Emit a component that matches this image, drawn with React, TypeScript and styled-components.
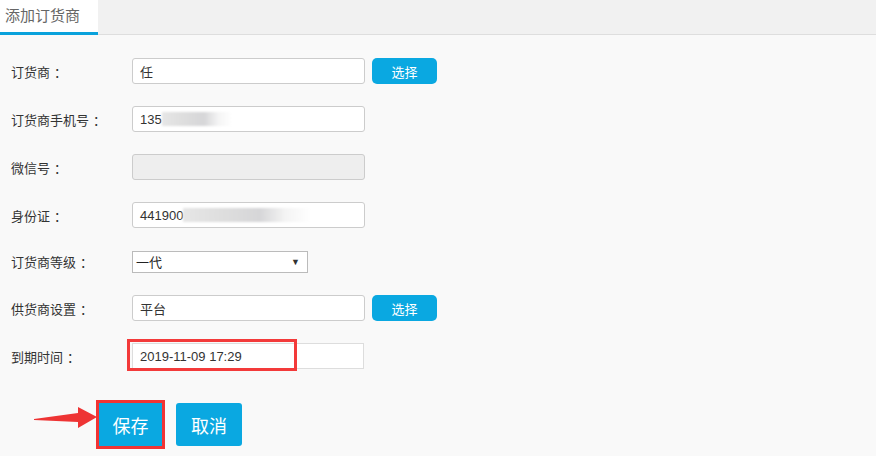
import styled, { createGlobalStyle } from 'styled-components'

const GlobalStyle = createGlobalStyle`
  html, body {
    margin: 0;
    padding: 0;
    background: #f9f9f9;
    font-family: "Liberation Sans", "Noto Sans CJK SC", sans-serif;
  }
`

const Page = styled.div`
  width: 876px;
  height: 456px;
  background: #f9f9f9;
  overflow: hidden;
  position: relative;
`

const TabBar = styled.div`
  height: 34px;
  background: #f1f1f1;
  border-bottom: 1px solid #dedede;
  display: flex;
`

const Tab = styled.div`
  width: 98px;
  background: #fff;
  border-bottom: 3px solid #0aa2dc;
  margin-bottom: -1px;
  padding-left: 5px;
  box-sizing: border-box;
  height: 35px;
  line-height: 31px;
  font-size: 15px;
  color: #666;
`

const Form = styled.div`
  padding: 23px 0 0 11px;
  display: flex;
  flex-direction: column;
  gap: 22px;
`

const Row = styled.div<{ $h?: number }>`
  display: flex;
  align-items: center;
  height: ${(p) => p.$h ?? 26}px;
`

const Label = styled.label`
  width: 121px;
  font-size: 13px;
  color: #333;
  flex-shrink: 0;
`

const Colon = styled.span`
  margin-left: 4px;
`

const Field = styled.div<{ $disabled?: boolean; $width?: number }>`
  width: ${(p) => p.$width ?? 233}px;
  height: 26px;
  box-sizing: border-box;
  border: 1px solid #cccccc;
  border-radius: 3px;
  background: ${(p) => (p.$disabled ? '#eeeeee' : '#fff')};
  padding-left: 7px;
  display: flex;
  align-items: center;
  font-size: 13px;
  color: #333;
  position: relative;
`

const Mask = styled.span<{ $w: number }>`
  display: inline-block;
  width: ${(p) => p.$w}px;
  height: 14px;
  background: linear-gradient(
    90deg,
    #e6e6e6 0%,
    #dedede 30%,
    #d6d6d8 60%,
    #f4f4f4 80%,
    #ffffff 100%
  );
  filter: blur(1px);
`

const Select = styled.div`
  width: 176px;
  height: 22px;
  box-sizing: border-box;
  border: 1px solid #bbb;
  background: #fff;
  display: flex;
  align-items: center;
  justify-content: space-between;
  padding: 0 7px 0 3px;
  font-size: 13px;
  color: #222;
`

const Caret = styled.span`
  font-size: 9px;
  color: #333;
`

const PickButton = styled.button`
  margin-left: 7px;
  width: 65px;
  height: 26px;
  border: none;
  border-radius: 5px;
  background: #0aa8e1;
  color: #fff;
  font-size: 13px;
  font-family: inherit;
  padding: 0;
`

const DateField = styled(Field)`
  border-color: #dddddd;
  border-radius: 0;
  width: 232px;
`

const Highlight = styled.div`
  position: absolute;
  left: -6px;
  top: -5px;
  width: 170px;
  height: 32px;
  border: 3px solid #f33a3a;
  box-sizing: border-box;
  pointer-events: none;
`

const DateText = styled.span`
  position: relative;
`

const Actions = styled.div`
  display: flex;
  gap: 14px;
  margin: 12px 0 0 88px;
`

const BigButton = styled.button<{ $marked?: boolean }>`
  width: ${(p) => (p.$marked ? 63 : 66)}px;
  height: 43px;
  border: none;
  border-radius: ${(p) => (p.$marked ? 0 : 3)}px;
  background: #0aa8e1;
  color: #fff;
  font-size: 18px;
  font-family: inherit;
  padding: 0;
  outline: ${(p) => (p.$marked ? '3px solid #f23434' : 'none')};
`

const Arrow = styled.svg`
  position: absolute;
  left: 34px;
  top: 406px;
`

export default function App() {
  return (
    <Page>
      <GlobalStyle />
      <TabBar>
        <Tab>添加订货商</Tab>
      </TabBar>
      <Form>
        <Row>
          <Label>订货商<Colon>：</Colon></Label>
          <Field>任</Field>
          <PickButton>选择</PickButton>
        </Row>
        <Row>
          <Label>订货商手机号<Colon>：</Colon></Label>
          <Field>
            135
            <Mask $w={70} />
          </Field>
        </Row>
        <Row>
          <Label>微信号<Colon>：</Colon></Label>
          <Field $disabled />
        </Row>
        <Row>
          <Label>身份证<Colon>：</Colon></Label>
          <Field>
            441900
            <Mask $w={128} />
          </Field>
        </Row>
        <Row $h={23}>
          <Label>订货商等级<Colon>：</Colon></Label>
          <Select>
            一代
            <Caret>▼</Caret>
          </Select>
        </Row>
        <Row>
          <Label>供货商设置<Colon>：</Colon></Label>
          <Field>平台</Field>
          <PickButton>选择</PickButton>
        </Row>
        <Row>
          <Label>到期时间<Colon>：</Colon></Label>
          <DateField>
            <Highlight />
            <DateText>2019-11-09 17:29</DateText>
          </DateField>
        </Row>
        <Actions>
          <BigButton $marked>保存</BigButton>
          <BigButton>取消</BigButton>
        </Actions>
      </Form>
      <Arrow width="64" height="24" viewBox="0 0 64 24">
        <polygon points="0,13 44,7 44,1 63,11 44,22 44,16 0,14" fill="#ee3434" />
      </Arrow>
    </Page>
  )
}
